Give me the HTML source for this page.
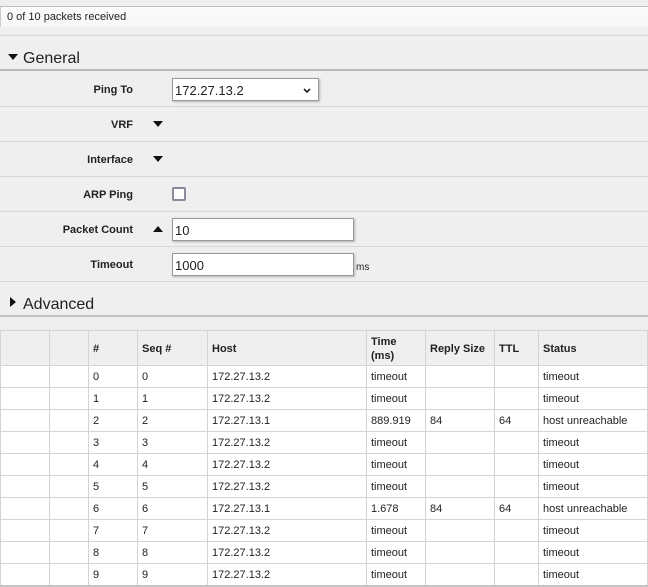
<!DOCTYPE html><html><head><style>
*{box-sizing:border-box;margin:0;padding:0}
body{width:648px;height:587px;background:#efefef;font-family:"Liberation Sans",sans-serif;position:relative;overflow:hidden;color:#222}
.a{position:absolute}
.hl{position:absolute;left:0;width:648px;height:1px;background:#d6d6d6}
.lbl{position:absolute;right:515px;font-size:11px;font-weight:bold;text-align:right}
.inp{position:absolute;background:#fff;border:1px solid #999;box-shadow:1px 1px 2px rgba(0,0,0,.25);font-size:13px;padding-left:2px;line-height:23px;height:23px}
table{position:absolute;left:0;top:330px;width:648px;border-collapse:collapse;font-size:11px;background:#fff}
td,th{border:1px solid #d4d4d4;padding:0 4px;text-align:left;height:22px}
th{background:#efefef;height:35px;font-weight:bold;line-height:14px;padding-top:2px}
</style></head><body>
<div class="a" style="left:0;top:6px;width:648px;height:21px;background:linear-gradient(#fcfcfc,#f6f6f6);border-top:1px solid #bdbdbd;border-left:1px solid #ccc;font-size:11px;padding:4px 0 0 6px">0 of 10 packets received</div>
<div class="hl" style="top:35px"></div>
<div class="a" style="left:8px;top:50px;font-size:16px;color:#222"><span style="display:inline-block;width:0;height:0;border-left:5px solid transparent;border-right:5px solid transparent;border-top:6px solid #111;vertical-align:3px;margin-right:5px"></span>General</div>
<div class="a" style="left:0;top:69px;width:648px;height:2px;background:#bbb"></div>
<div class="lbl" style="top:84px">Ping To</div>
<div class="inp" style="left:172px;top:78px;width:147px">172.27.13.2<svg style="position:absolute;right:7px;top:9px" width="8" height="6" viewBox="0 0 8 6"><path d="M1 1L4 4L7 1" stroke="#222" stroke-width="1.6" fill="none"/></svg></div>
<div class="hl" style="top:106px"></div>
<div class="lbl" style="top:119px">VRF</div>
<div class="a" style="left:153px;top:121px;border-left:5px solid transparent;border-right:5px solid transparent;border-top:6px solid #111"></div>
<div class="hl" style="top:141px"></div>
<div class="lbl" style="top:154px">Interface</div>
<div class="a" style="left:153px;top:156px;border-left:5px solid transparent;border-right:5px solid transparent;border-top:6px solid #111"></div>
<div class="hl" style="top:176px"></div>
<div class="lbl" style="top:189px">ARP Ping</div>
<div class="a" style="left:172px;top:187px;width:14px;height:14px;border:2px solid #8a8a98;background:#fff;border-radius:2px"></div>
<div class="hl" style="top:211px"></div>
<div class="lbl" style="top:224px">Packet Count</div>
<div class="a" style="left:153px;top:226px;border-left:5px solid transparent;border-right:5px solid transparent;border-bottom:6px solid #111"></div>
<div class="inp" style="left:172px;top:218px;width:182px">10</div>
<div class="hl" style="top:246px"></div>
<div class="lbl" style="top:259px">Timeout</div>
<div class="inp" style="left:172px;top:253px;width:182px">1000</div>
<div class="a" style="left:356px;top:262px;font-size:10px">ms</div>
<div class="hl" style="top:281px"></div>
<div class="a" style="left:10px;top:296px;font-size:16px"><span style="display:inline-block;width:0;height:0;border-top:5px solid transparent;border-bottom:5px solid transparent;border-left:6px solid #111;vertical-align:2px;margin-right:7px"></span>Advanced</div>
<div class="a" style="left:0;top:315px;width:648px;height:2px;background:#c4c4c4"></div>
<table>
<tr><th style="width:49px"></th><th style="width:39px"></th><th style="width:49px">#</th><th style="width:70px">Seq #</th><th style="width:159px">Host</th><th style="width:59px">Time<br>(ms)</th><th style="width:69px">Reply Size</th><th style="width:44px">TTL</th><th>Status</th></tr>
<tr><td></td><td></td><td>0</td><td>0</td><td>172.27.13.2</td><td>timeout</td><td></td><td></td><td>timeout</td></tr>
<tr><td></td><td></td><td>1</td><td>1</td><td>172.27.13.2</td><td>timeout</td><td></td><td></td><td>timeout</td></tr>
<tr><td></td><td></td><td>2</td><td>2</td><td>172.27.13.1</td><td>889.919</td><td>84</td><td>64</td><td>host unreachable</td></tr>
<tr><td></td><td></td><td>3</td><td>3</td><td>172.27.13.2</td><td>timeout</td><td></td><td></td><td>timeout</td></tr>
<tr><td></td><td></td><td>4</td><td>4</td><td>172.27.13.2</td><td>timeout</td><td></td><td></td><td>timeout</td></tr>
<tr><td></td><td></td><td>5</td><td>5</td><td>172.27.13.2</td><td>timeout</td><td></td><td></td><td>timeout</td></tr>
<tr><td></td><td></td><td>6</td><td>6</td><td>172.27.13.1</td><td>1.678</td><td>84</td><td>64</td><td>host unreachable</td></tr>
<tr><td></td><td></td><td>7</td><td>7</td><td>172.27.13.2</td><td>timeout</td><td></td><td></td><td>timeout</td></tr>
<tr><td></td><td></td><td>8</td><td>8</td><td>172.27.13.2</td><td>timeout</td><td></td><td></td><td>timeout</td></tr>
<tr><td></td><td></td><td>9</td><td>9</td><td>172.27.13.2</td><td>timeout</td><td></td><td></td><td>timeout</td></tr>
</table>
<div class="a" style="left:0;top:585px;width:648px;height:2px;background:#c4c4c4"></div>
</body></html>
